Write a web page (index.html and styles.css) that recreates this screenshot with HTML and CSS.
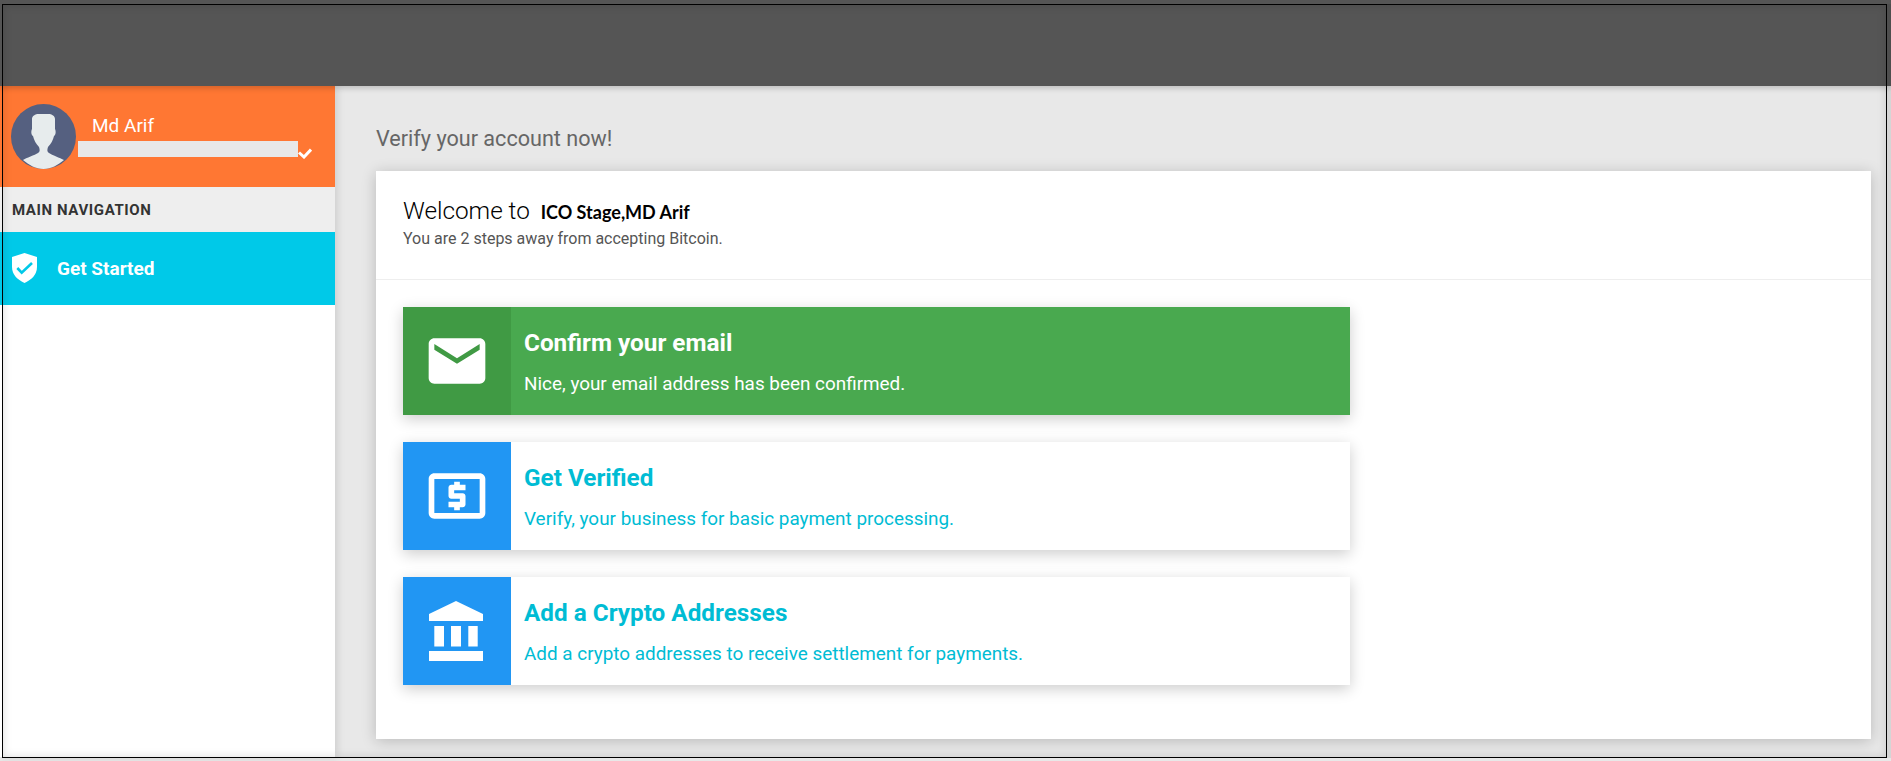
FILE: index.html
```html
<!DOCTYPE html>
<html lang="en">
<head>
  <meta charset="UTF-8">
  <meta name="viewport" content="width=device-width, initial-scale=1.0">
  <title>Get Started</title>
  <link rel="stylesheet" href="styles.css">
</head>
<body>

<header class="topbar"></header>

<div class="layout">
  <aside class="sidebar">
    <div class="user-panel">
      <svg class="avatar" viewBox="0 0 65 65">
        <circle cx="32.5" cy="32.5" r="32.5" fill="#556080"/>
        <path fill="#e7eced" d="M12 56C15 54 24 51 27 49C29 48 29 46 28 43C25 40 23 36 22 32C20 31 20 27 21 25L21 15C21 12 24 10 28 10L37 10C41 10 44 12 44 15L44 25C45 27 45 31 43 32C42 36 40 40 37 43C36 46 36 48 38 49C41 51 49 54 53 56C47 61 40 65 32.5 65C25 65 18 61 12 56Z"/>
      </svg>
      <div class="user-info">
        <div class="user-name">Md Arif</div>
        <div class="user-mail">
          <span class="mail-bar"></span>
          <svg class="caret" viewBox="0 0 14 11"><path d="M1 4.5l5 4.5 7-7.5" fill="none" stroke="#fff" stroke-width="3"/></svg>
        </div>
      </div>
    </div>
    <div class="nav-label">MAIN NAVIGATION</div>
    <a class="nav-item" href="#">
      <svg class="nav-icon" viewBox="0 0 25 30">
        <path fill="#fff" d="M12.5 0L25 4V14C25 22 19 27 12.5 30C6 27 0 22 0 14V4Z"/>
        <path fill="none" stroke="#00c9e8" stroke-width="2.6" d="M5.3 15L9.7 19.6L20 10"/>
      </svg>
      <span>Get Started</span>
    </a>
  </aside>

  <main class="content">
    <h1 class="page-title">Verify your account now!</h1>
    <section class="card">
      <div class="card-head">
        <h2>Welcome to <b>ICO Stage,MD Arif</b></h2>
        <p>You are 2 steps away from accepting Bitcoin.</p>
      </div>
      <div class="steps">
        <div class="step done">
          <div class="step-icon">
            <svg viewBox="0 0 24 24"><path fill="#fff" d="M20 4H4c-1.1 0-1.99.9-1.99 2L2 18c0 1.1.9 2 2 2h16c1.1 0 2-.9 2-2V6c0-1.1-.9-2-2-2zm0 4l-8 5-8-5V6l8 5 8-5v2z"/></svg>
          </div>
          <div class="step-text">
            <h3>Confirm your email</h3>
            <p>Nice, your email address has been confirmed.</p>
          </div>
        </div>
        <div class="step">
          <div class="step-icon">
            <svg viewBox="0 0 24 24"><path fill="#fff" d="M11 17h2v-1h1c.55 0 1-.45 1-1v-3c0-.55-.45-1-1-1h-3v-1h4V8h-2V7h-2v1h-1c-.55 0-1 .45-1 1v3c0 .55.45 1 1 1h3v1H9v2h2v1zm9-13H4c-1.11 0-1.99.89-1.99 2L2 18c0 1.11.89 2 2 2h16c1.11 0 2-.89 2-2V6c0-1.11-.89-2-2-2zm0 14H4V6h16v12z"/></svg>
          </div>
          <div class="step-text">
            <h3>Get Verified</h3>
            <p>Verify, your business for basic payment processing.</p>
          </div>
        </div>
        <div class="step">
          <div class="step-icon">
            <svg class="bank" viewBox="0 0 56 60"><path fill="#fff" d="M27 0L54 13V20H0V13ZM5.3 25H15V45.4H5.3ZM22 25H32V45.4H22ZM39.3 25H48.7V45.4H39.3ZM0 50H54V60H0Z"/></svg>
          </div>
          <div class="step-text">
            <h3>Add a Crypto Addresses</h3>
            <p>Add a crypto addresses to receive settlement for payments.</p>
          </div>
        </div>
      </div>
    </section>
  </main>
</div>

<div class="frame"></div>

</body>
</html>
```

FILE: styles.css
```css
html,
body {
  height: 100%;
}

body {
  margin: 0;
  overflow: hidden;
  position: relative;
  font-family: 'Roboto', sans-serif;
  background-color: #e8e8e8;
}

.topbar {
  height: 86px;
  background-color: #555;
  box-shadow: 0 2px 6px rgba(0, 0, 0, 0.2);
  position: relative;
  z-index: 2;
}

.layout {
  display: flex;
  height: 675px;
}

.sidebar {
  width: 335px;
  height: 671px;
  flex-shrink: 0;
  background-color: #fff;
  box-shadow: 2px 0 8px rgba(0, 0, 0, 0.12);
  position: relative;
  z-index: 1;
}

.user-panel {
  height: 101px;
  display: flex;
  align-items: center;
  padding-left: 11px;
  box-sizing: border-box;
  background-color: #ff7733;
}

.avatar {
  width: 65px;
  height: 65px;
  flex-shrink: 0;
}

.user-info {
  margin-left: 2px;
  padding-bottom: 2px;
}

.user-name {
  color: #fff;
  font-size: 19px;
  line-height: 22px;
  padding-left: 14px;
  margin-bottom: 4px;
}

.user-mail {
  display: flex;
  align-items: flex-end;
}

.mail-bar {
  display: block;
  width: 220px;
  height: 16px;
  background-color: #e8e8e8;
}

.caret {
  width: 14px;
  height: 11px;
  margin-bottom: -2px;
}

.nav-label {
  height: 45px;
  line-height: 47px;
  padding-left: 12px;
  font-size: 15px;
  font-weight: 700;
  letter-spacing: 0.6px;
  color: #333;
  background-color: #eee;
}

.nav-item {
  height: 73px;
  display: flex;
  align-items: center;
  padding-left: 12px;
  color: #fff;
  font-size: 19px;
  font-weight: 700;
  text-decoration: none;
  background-color: #00c9e8;
}

.nav-icon {
  width: 25px;
  height: 30px;
  margin-right: 20px;
  margin-top: -2px;
}

.content {
  flex: 1;
  min-width: 0;
  padding: 37px 20px 0 41px;
}

.page-title {
  margin: 0 0 16px;
  font-size: 21.6px;
  font-weight: 400;
  line-height: 32px;
  color: #666;
}

.card {
  height: 568px;
  background-color: #fff;
  box-shadow: 0 2px 14px rgba(0, 0, 0, 0.2);
}

.card-head {
  height: 109px;
  box-sizing: border-box;
  padding: 25px 27px 0;
  border-bottom: 1px solid #eee;
}

.card-head h2 {
  margin: 0;
  font-size: 24.3px;
  font-weight: 300;
  line-height: 30px;
  color: #000;
}

.card-head b {
  margin-left: 5px;
  font-family: 'Lato', sans-serif;
  font-size: 18px;
  font-weight: 700;
  color: #000;
}

.card-head p {
  margin: 2px 0 0;
  font-size: 16px;
  line-height: 20px;
  color: #555;
}

.steps {
  display: flex;
  flex-direction: column;
  gap: 27px;
  padding: 27px 27px 0;
}

.step {
  display: flex;
  width: 947px;
  height: 108px;
  background-color: #fff;
  color: #00bcd4;
  box-shadow: 0 4px 14px rgba(0, 0, 0, 0.2);
}

.step.done {
  background-color: #49a94f;
  color: #fff;
}

.step-icon {
  width: 107px;
  padding-right: 1px;
  display: flex;
  align-items: center;
  justify-content: center;
  background-color: #2196f3;
}

.step.done .step-icon {
  background-color: #409a44;
}

.step-icon svg {
  width: 68px;
  height: 68px;
}

.step-icon .bank {
  width: 56px;
  height: 60px;
}

.step-text {
  padding: 20px 0 0 13px;
}

.step-text h3 {
  margin: 0 0 13px;
  font-size: 24.3px;
  font-weight: 700;
  line-height: 32px;
}

.step-text p {
  margin: 0;
  font-size: 18.9px;
  line-height: 24px;
}

.frame {
  position: absolute;
  left: 2px;
  top: 4px;
  width: 1885px;
  height: 754px;
  box-sizing: border-box;
  border: 1px solid #000;
  box-shadow: inset 0 0 10px rgba(0, 0, 0, 0.14), 4px 0 0 rgba(0, 0, 0, 0.08);
  z-index: 5;
}
```
